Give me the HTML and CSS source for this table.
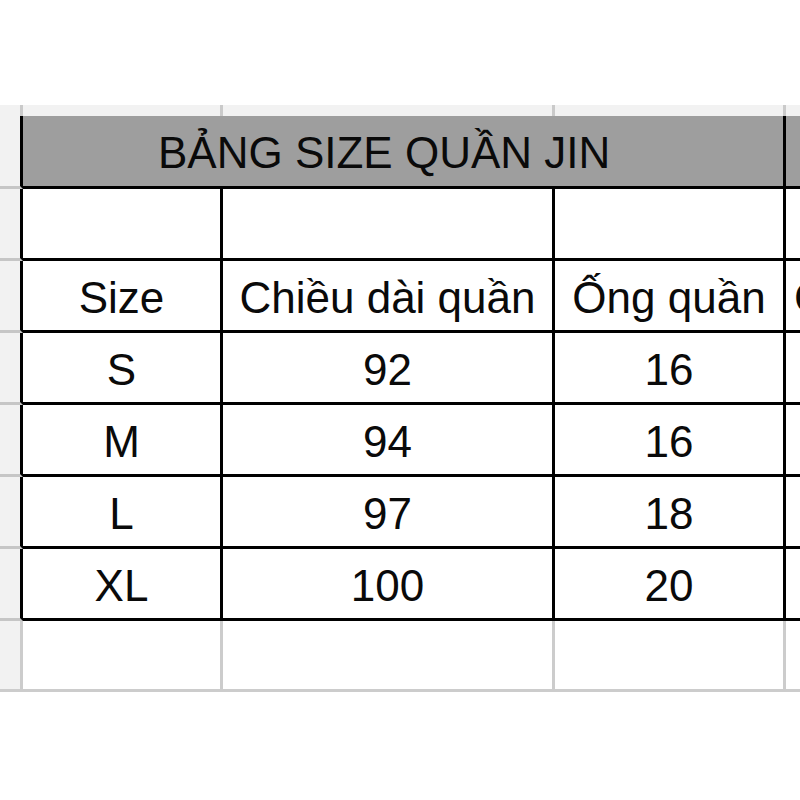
FILE: index.html
```html
<!DOCTYPE html>
<html lang="vi">
<head>
<meta charset="utf-8">
<title>Bảng size quần jin</title>
<link rel="stylesheet" href="styles.css">
</head>
<body>
<div class="sheet">
  <div class="grid">
    <div class="c top"></div><div class="c top"></div><div class="c top"></div><div class="c top"></div><div class="c top"></div>

    <div class="c rh"></div><div class="c title">BẢNG SIZE QUẦN JIN</div><div class="c hd"></div>

    <div class="c rh"></div><div class="c"></div><div class="c"></div><div class="c"></div><div class="c"></div>

    <div class="c rh"></div><div class="c">Size</div><div class="c">Chiều dài quần</div><div class="c">Ống quần</div><div class="c left">Cân nặng</div>

    <div class="c rh"></div><div class="c">S</div><div class="c">92</div><div class="c">16</div><div class="c"></div>
    <div class="c rh"></div><div class="c">M</div><div class="c">94</div><div class="c">16</div><div class="c"></div>
    <div class="c rh"></div><div class="c">L</div><div class="c">97</div><div class="c">18</div><div class="c"></div>
    <div class="c rh"></div><div class="c">XL</div><div class="c">100</div><div class="c">20</div><div class="c"></div>

    <div class="c rh foot"></div><div class="c foot"></div><div class="c foot"></div><div class="c foot"></div><div class="c foot"></div>
  </div>
</div>
</body>
</html>
```

FILE: styles.css
```css
html, body {
  margin: 0;
  padding: 0;
  background: #ffffff;
}

.sheet {
  width: 800px;
  height: 800px;
  overflow: hidden;
  padding-top: 105px;
  box-sizing: border-box;
}

.grid {
  display: grid;
  grid-template-columns: 23px 200px 332px 231px 220px;
  grid-template-rows: 11px 73px repeat(6, 72px) 71px;
  width: 1006px;
  font-family: "Liberation Sans", Arial, sans-serif;
  font-size: 44px;
  color: #0a0a0a;
}

.c {
  box-sizing: border-box;
  border-right: 3px solid #000;
  border-bottom: 3px solid #000;
  display: flex;
  align-items: center;
  justify-content: center;
  padding-top: 5px;
  white-space: nowrap;
  overflow: hidden;
  background: #ffffff;
}

.left {
  justify-content: flex-start;
  padding-left: 8px;
}

.top {
  background: #f2f2f2;
  border-right-color: #cacaca;
  border-bottom: none;
  padding: 0;
}

.rh {
  background: #f2f2f2;
  border-bottom-color: #c6c6c6;
}

.title {
  grid-column: span 3;
  background: #9e9e9e;
  justify-content: flex-start;
  padding-left: 135px;
  padding-top: 3px;
}

.hd {
  background: #9e9e9e;
}

.foot {
  border-right-color: #cccccc;
  border-bottom-color: #cccccc;
}

.rh.foot {
  background: #f2f2f2;
}
```
